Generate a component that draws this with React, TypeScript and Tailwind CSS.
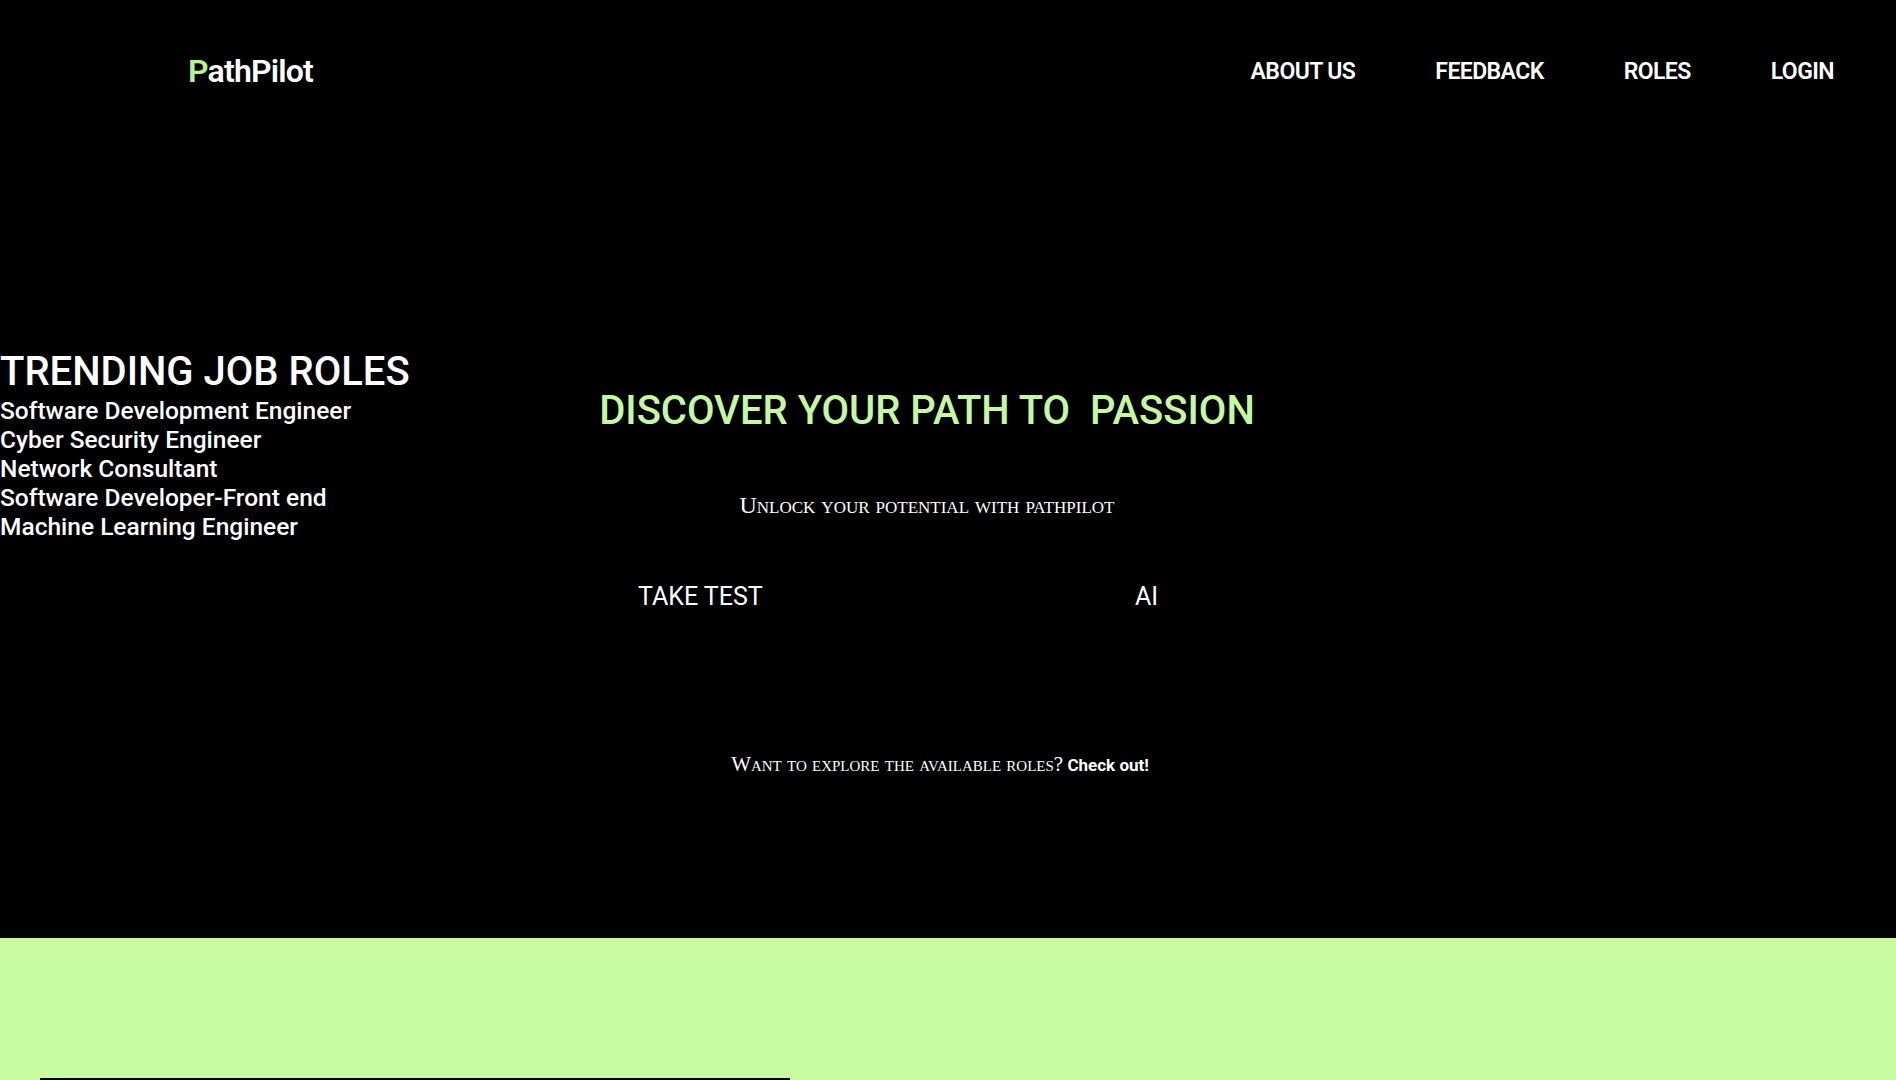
import React from "react";

const roles = [
  "Software Development Engineer",
  "Cyber Security Engineer",
  "Network Consultant",
  "Software Developer-Front end",
  "Machine Learning Engineer",
];

const navLinks = ["ABOUT US", "FEEDBACK", "ROLES", "LOGIN"];

export default function App() {
  return (
    <div className="w-full min-h-screen bg-black font-['Roboto',sans-serif] text-white">
      {/* hero */}
      <section className="h-[938px] bg-black flex flex-col">
        <header className="flex items-center justify-between pl-[188px] pr-[62px] pt-[55px]">
          <a className="text-[32px] font-semibold tracking-tight leading-none">
            <span className="text-[#b8f28c]">P</span>athPilot
          </a>
          <nav className="flex gap-[80px]">
            {navLinks.map((l) => (
              <a key={l} className="text-[23px] font-semibold leading-none tracking-tight">
                {l}
              </a>
            ))}
          </nav>
        </header>

        <div className="flex items-start mt-[261px]">
          {/* trending */}
          <aside className="w-[560px] shrink-0">
            <h2 className="text-[40px] font-medium leading-[48px]">TRENDING JOB ROLES</h2>
            <ul className="text-[24.5px] font-medium leading-[29px]">
              {roles.map((r) => (
                <li key={r}>{r}</li>
              ))}
            </ul>
          </aside>

          {/* main call to action */}
          <div className="w-[734px] flex flex-col mt-[37px]">
            <h1 className="text-center text-[40px] font-medium leading-[52px] text-[#c6f99e] whitespace-pre">
              {"DISCOVER YOUR PATH TO  PASSION"}
            </h1>
            <p className="mt-[53px] text-center font-['Liberation_Serif',serif] text-[24px] leading-[30px] [font-variant:small-caps]">
              Unlock your potential with pathpilot
            </p>
            <div className="flex justify-between pl-[78px] pr-[136px] mt-[64px]">
              <button className="text-[25px] leading-none">TAKE TEST</button>
              <button className="text-[25px] leading-none">AI</button>
            </div>
            <p className="mt-[140px] pl-[26px] text-center text-[17px] leading-[30px]">
              <span className="font-['Liberation_Serif',serif] text-[21px] [font-variant:small-caps]">
                Want to explore the available roles?
              </span>{" "}
              <a className="font-bold">Check out!</a>
            </p>
          </div>
        </div>
      </section>

      {/* roles section */}
      <section className="bg-[#c9fba3] pt-[140px] pb-[120px] pl-[40px]">
        <div className="w-[750px] h-[260px] bg-black" />
      </section>
    </div>
  );
}
